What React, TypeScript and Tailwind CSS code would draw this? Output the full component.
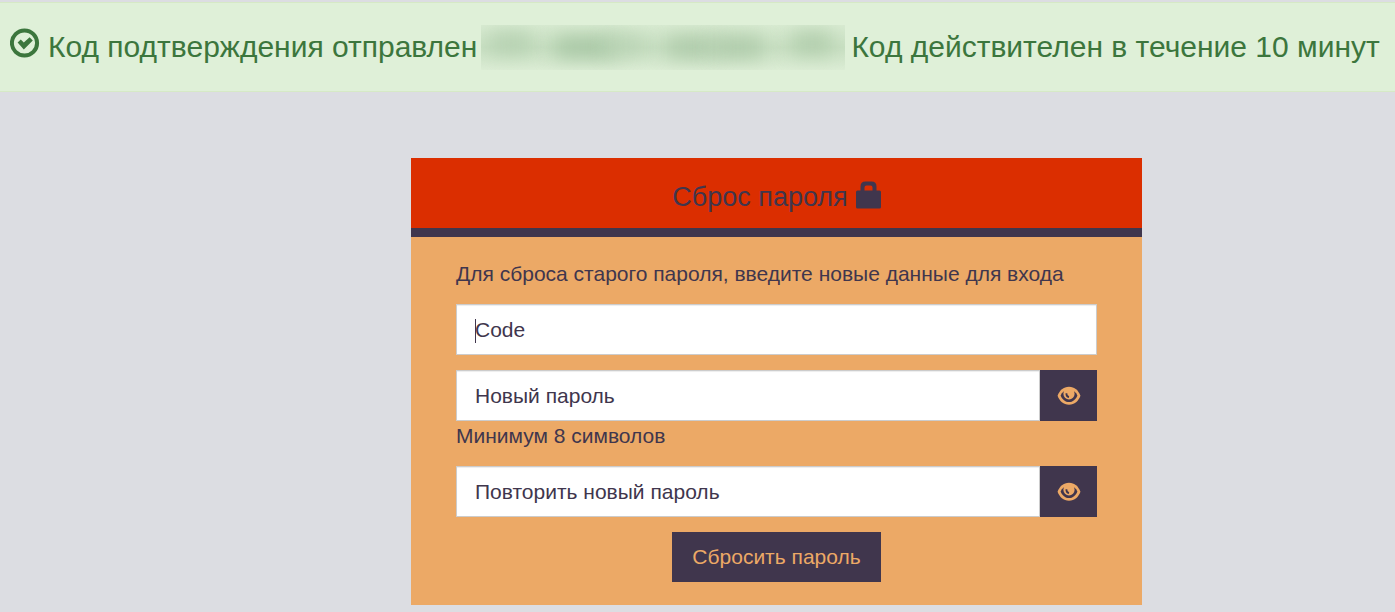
import { useState } from 'react';

function OkCircleIcon() {
  return (
    <svg viewBox="0 0 30 30" className="h-[30px] w-[30px] shrink-0" aria-hidden="true">
      <circle cx="14.5" cy="15" r="12.6" fill="none" stroke="currentColor" strokeWidth="4" />
      <path d="M7.6 14.6l3.2-3.2 3 3 5.8-5.2 3.2 3.2-9 9.2z" fill="currentColor" />
    </svg>
  );
}

function LockIcon() {
  return (
    <svg viewBox="0 0 25 28" className="h-7 w-[25px]" aria-hidden="true">
      <path
        d="M1.5 9.5H4.5V5.5Q4.5 0.5 9.5 0.5H15.5Q20.5 0.5 20.5 5.5V9.5H23.5Q25 9.5 25 11V26Q25 27.5 23.5 27.5H1.5Q0 27.5 0 26V11Q0 9.5 1.5 9.5ZM8.5 9.5H16.5V6.5Q16.5 4.5 14.5 4.5H10.5Q8.5 4.5 8.5 6.5Z"
        fill="currentColor"
        fillRule="evenodd"
      />
    </svg>
  );
}

function EyeIcon() {
  return (
    <svg viewBox="0 0 24 20" className="h-5 w-6" aria-hidden="true">
      <path d="M12 .8C6.5.8 2.4 4.6.6 9.8 2.4 15 6.5 18.8 12 18.8S21.6 15 23.4 9.8C21.6 4.6 17.5.8 12 .8Z" fill="currentColor" />
      <path d="M6.6 5.4Q4.6 7 3.6 9.4C5.2 13.4 8.2 16 12 16S18.8 13.4 20.4 9.4Q19.4 7 17.4 5.4Z" fill="#40364d" />
      <circle cx="12" cy="7.8" r="5.6" fill="currentColor" />
      <path d="M9.4 7.2Q9.2 10.6 12 11.2" fill="none" stroke="#40364d" strokeWidth="1.8" />
    </svg>
  );
}

const inputClass =
  'h-[51px] w-full min-w-0 border border-[#ccc] bg-white px-[18px] text-[21px] text-[#40364d] shadow-[inset_0_1px_1px_rgba(0,0,0,0.075)] outline-none placeholder:text-[#40364d] placeholder:opacity-100';

function PasswordField({ label }: { label: string }) {
  const [visible, setVisible] = useState(false);

  return (
    <div className="flex">
      <input type={visible ? 'text' : 'password'} aria-label={label} placeholder={label} className={inputClass} />
      <button
        type="button"
        aria-label="Показать пароль"
        onClick={() => setVisible(!visible)}
        className="flex w-[57px] shrink-0 items-center justify-center bg-[#40364d] text-[#eca966]"
      >
        <EyeIcon />
      </button>
    </div>
  );
}

export default function App() {
  return (
    <div className="min-h-screen bg-[#dcdde2] pt-0.5 font-['Liberation_Sans',Arial,sans-serif] text-[21px] leading-[30px] text-[#40364d]">
      {/* Alert */}
      <div
        role="alert"
        className="flex h-[90px] items-center border-y border-[#d6e9c6] bg-[#dff0d8] px-2.5 text-[30px] whitespace-nowrap text-[#3c763d]"
      >
        <div className="mr-2 pb-2">
          <OkCircleIcon />
        </div>
        <span>Код подтверждения отправлен</span>
        {/* Hidden recipient */}
        <div className="relative mr-1.5 ml-1 h-[45px] w-[364px] overflow-hidden bg-linear-to-b from-[#d9ebd2] via-[#c9e0c3] to-[#dcedd5]">
          <div className="absolute top-2 left-2 h-5 w-11 bg-[#b3cfaf] blur-[10px]" />
          <div className="absolute top-3 left-[74px] h-5 w-[60px] bg-[#a5c5a2] blur-[10px]" />
          <div className="absolute top-3 left-[125px] h-4 w-10 bg-[#b6d1b2] blur-[10px]" />
          <div className="absolute top-3 left-[186px] h-5 w-12 bg-[#acc9a8] blur-[10px]" />
          <div className="absolute top-3 left-[232px] h-5 w-[50px] bg-[#acc9a8] blur-[10px]" />
          <div className="absolute top-2 left-[311px] h-5 w-10 bg-[#aecba9] blur-[10px]" />
        </div>
        <span>Код действителен в течение 10 минут</span>
      </div>

      {/* Reset form */}
      <main className="grid grid-cols-[411fr_731fr_253fr] pt-[66px]">
        <section className="col-start-2 bg-[#eca966]">
          <header className="border-b-[9px] border-[#40364d] bg-[#db2e00] pt-5 pb-4">
            <h1 className="flex items-center justify-center gap-2 text-[27px]">
              <span className="pt-1">Сброс пароля</span>
              <LockIcon />
            </h1>
          </header>

          <form className="flex flex-col gap-[15px] px-[45px] pt-[22px] pb-[23px]" onSubmit={(e) => e.preventDefault()}>
            <p>Для сброса старого пароля, введите новые данные для входа</p>

            <div className="relative">
              <input type="text" aria-label="Code" placeholder="Code" className={inputClass} />
              <span className="absolute top-[15px] left-[19px] h-6 w-px bg-[#40364d]" />
            </div>

            <div>
              <PasswordField label="Новый пароль" />
              <p>Минимум 8 символов</p>
            </div>

            <PasswordField label="Повторить новый пароль" />

            <button type="submit" className="h-[50px] self-center bg-[#40364d] px-5 text-[#eca966]">
              Сбросить пароль
            </button>
          </form>
        </section>
      </main>
    </div>
  );
}
